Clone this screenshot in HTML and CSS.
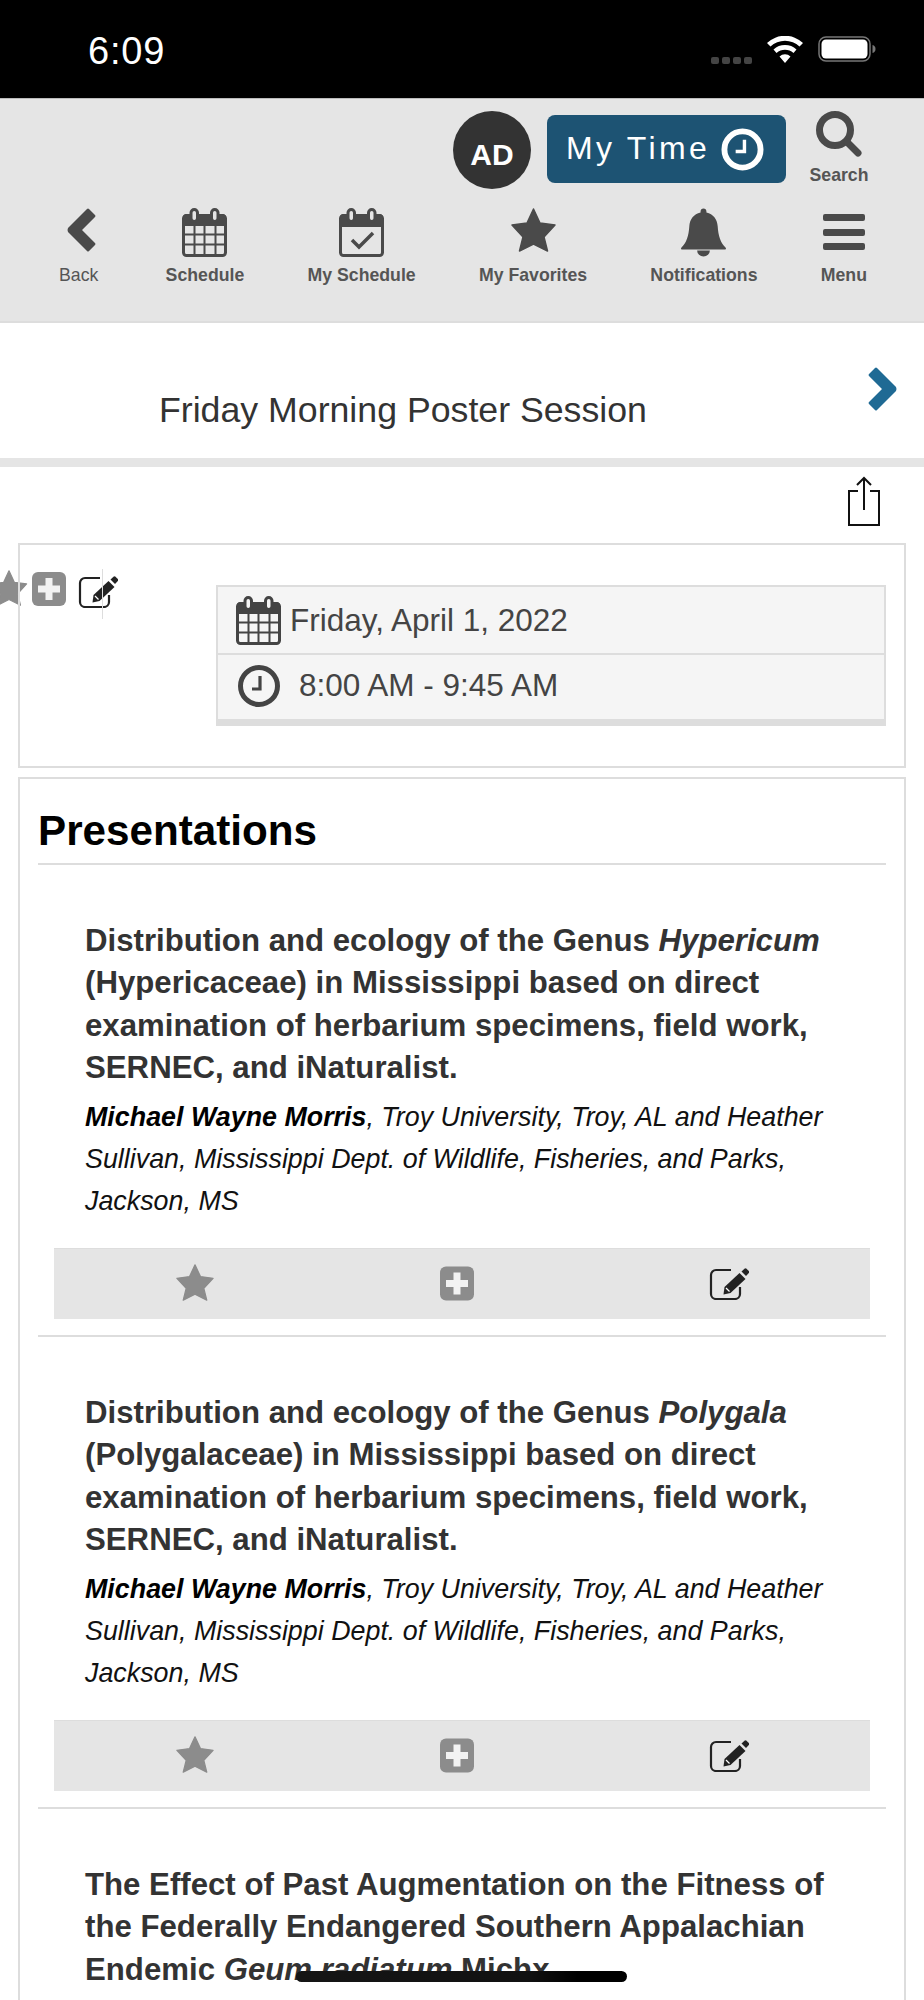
FILE: index.html
```html
<!DOCTYPE html>
<html lang="en">
<head>
<meta charset="utf-8">
<title>Friday Morning Poster Session</title>
<link rel="stylesheet" href="styles.css">
</head>
<body>
<svg class="defs" width="0" height="0" aria-hidden="true">
  <symbol id="i-cal" viewBox="0 0 45 49">
    <rect x="1.500" y="7.500" width="42" height="40" rx="3" fill="none" stroke="currentColor" stroke-width="3"/>
    <path d="M1 10a4 4 0 0 1 4-4h35a4 4 0 0 1 4 4v8H1z" fill="currentColor"/>
    <path d="M2 26.500h41M2 36.500h41M12.500 18v30M22.500 18v30M33.500 18v30" fill="none" stroke="currentColor" stroke-width="2"/>
    <rect class="ring" x="9" y="1.500" width="6.500" height="12" rx="3.200"/>
    <rect class="ring" x="29.500" y="1.500" width="6.500" height="12" rx="3.200"/>
  </symbol>
  <symbol id="i-calcheck" viewBox="0 0 45 49">
    <rect x="1.500" y="7.500" width="42" height="40" rx="3" fill="none" stroke="currentColor" stroke-width="3"/>
    <path d="M1 10a4 4 0 0 1 4-4h35a4 4 0 0 1 4 4v9H1z" fill="currentColor"/>
    <path d="M13 32l7 7 14-14" fill="none" stroke="currentColor" stroke-width="3.500"/>
    <rect class="ring" x="9" y="1.500" width="6.500" height="12" rx="3.200"/>
    <rect class="ring" x="29.500" y="1.500" width="6.500" height="12" rx="3.200"/>
  </symbol>
  <symbol id="i-star" viewBox="0 0 45 44">
    <path d="M22.500 1L29 15 44 17 33 29 36.500 43 22.500 36 8.500 43 12 29 1 17 16 15z" fill="currentColor" stroke="currentColor" stroke-width="1.500" stroke-linejoin="round"/>
  </symbol>
  <symbol id="i-plus" viewBox="0 0 34 34">
    <rect width="34" height="34" rx="6" fill="currentColor"/>
    <path d="M17 6v22M6 17h22" fill="none" stroke="#f2f2f2" stroke-width="7"/>
  </symbol>
  <symbol id="i-edit" viewBox="0 0 40 32">
    <path d="M22 2H7a5 5 0 0 0-5 5v19a5 5 0 0 0 5 5h19a5 5 0 0 0 5-5v-7" fill="none" stroke="currentColor" stroke-width="2.200"/>
    <path d="M14.500 26.500L15.500 19 30.500 5 36.500 11 21.500 25z" fill="currentColor"/>
    <path d="M32.500 3.500l3-2.800q1-.7 2 0l2.300 2.300q.7 1 0 2L37 8z" fill="currentColor"/>
    <path d="M17 20l3.500 3.500" fill="none" stroke="#fff" stroke-width="1.200"/>
  </symbol>
  <symbol id="i-clock" viewBox="0 0 42 42">
    <circle cx="21" cy="21" r="18.500" fill="none" stroke="currentColor" stroke-width="5"/>
    <path d="M22 11v13H14" fill="none" stroke="currentColor" stroke-width="3.200"/>
  </symbol>
</svg>

<header class="status">
  <span class="status-time">6:09</span>
  <div class="status-right">
    <span class="signal"><i></i><i></i><i></i><i></i></span>
    <svg class="wifi" viewBox="0 0 36 27"><path d="M18 27l-5.500-6.500a8 8 0 0 1 11 0zM9.500 17l-3-3.500a17 17 0 0 1 23 0l-3 3.500a13 13 0 0 0-17 0zM3.500 10.500L0 7a26 26 0 0 1 36 0l-3.500 3.500a21 21 0 0 0-29 0z" fill="#fff"/></svg>
    <svg class="battery" viewBox="0 0 58 26"><rect x="1" y="1" width="51" height="24" rx="7" fill="none" stroke="#777" stroke-width="1.500"/><rect x="3.500" y="3.500" width="46" height="19" rx="4.500" fill="#fff"/><path d="M54.500 9c2 .5 3 2 3 4s-1 3.500-3 4z" fill="#777"/></svg>
  </div>
</header>

<nav class="topbar">
  <div class="top-row">
    <span class="avatar">AD</span>
    <a class="mytime"><span>My Time</span><svg class="mytime-clock" viewBox="0 0 44 44"><circle cx="22" cy="22" r="18.500" fill="none" stroke="#fff" stroke-width="6"/><path d="M24 12v12H15" fill="none" stroke="#fff" stroke-width="3.500"/></svg></a>
    <a class="search">
      <svg class="search-icon" viewBox="0 0 46 46"><circle cx="19" cy="19" r="15.500" fill="none" stroke="currentColor" stroke-width="7"/><path d="M31 31l11 11" fill="none" stroke="currentColor" stroke-width="7" stroke-linecap="round"/></svg>
      <span>Search</span>
    </a>
  </div>
  <div class="nav-row">
    <a class="nav-item nav-back"><svg class="nav-icon ic-chev" viewBox="0 0 29 44"><path d="M22 1L28 7Q29 8 28 9L15 22 28 35Q29 36 28 37L22 43Q21 44 20 43L1 24Q0 22 1 20L20 1Q21 0 22 1Z" fill="currentColor"/></svg><span>Back</span></a>
    <a class="nav-item nav-schedule"><svg class="nav-icon ic-cal"><use href="#i-cal"/></svg><span>Schedule</span></a>
    <a class="nav-item"><svg class="nav-icon ic-cal"><use href="#i-calcheck"/></svg><span>My Schedule</span></a>
    <a class="nav-item"><svg class="nav-icon ic-star"><use href="#i-star"/></svg><span>My Favorites</span></a>
    <a class="nav-item"><svg class="nav-icon ic-cal" viewBox="0 0 46 49"><path d="M23 0c1.800 0 3 1.200 3 3v1c7 1.500 11 7 11.500 14 .6 10 3 17 8.200 22 .6.700.3 2-1 2H1.300c-1.300 0-1.600-1.300-1-2C5.500 35 7.900 28 8.500 18 9 11 13 5.500 20 4V3c0-1.800 1.200-3 3-3z" fill="currentColor"/><path d="M16.500 43a6.500 6 0 0 0 13 0z" fill="currentColor"/></svg><span>Notifications</span></a>
    <a class="nav-item nav-menu"><svg class="nav-icon ic-menu" viewBox="0 0 42 36"><path d="M2 0h38a2 2 0 0 1 2 2v3a2 2 0 0 1-2 2H2a2 2 0 0 1-2-2V2a2 2 0 0 1 2-2zM2 15h38a2 2 0 0 1 2 2v3a2 2 0 0 1-2 2H2a2 2 0 0 1-2-2v-3a2 2 0 0 1 2-2zM2 29h38a2 2 0 0 1 2 2v3a2 2 0 0 1-2 2H2a2 2 0 0 1-2-2v-3a2 2 0 0 1 2-2z" fill="currentColor"/></svg><span>Menu</span></a>
  </div>
</nav>

<section class="title-bar">
  <h1 class="title">Friday Morning Poster Session</h1>
  <svg class="chevron-next" viewBox="0 0 29 44"><path d="M7 1L1 7Q0 8 1 9L14 22 1 35Q0 36 1 37L7 43Q8 44 9 43L28 24Q29 22 28 20L9 1Q8 0 7 1Z" fill="#1f6a94"/></svg>
</section>

<div class="share-row">
  <svg class="share" viewBox="0 0 32 50"><path d="M10 15H1v34h30V15h-9" fill="none" stroke="#111" stroke-width="2"/><path d="M16 34V2M9 9l7-7 7 7" fill="none" stroke="#111" stroke-width="2"/></svg>
</div>

<section class="card session">
  <div class="session-actions">
    <svg class="sa-star"><use href="#i-star"/></svg>
    <svg class="sa-plus"><use href="#i-plus"/></svg>
    <svg class="sa-edit"><use href="#i-edit"/></svg>
    <i class="sa-line"></i>
  </div>
  <div class="when">
    <div class="when-row"><svg class="when-cal"><use href="#i-cal"/></svg><span>Friday, April 1, 2022</span></div>
    <div class="when-row when-time"><svg class="when-clock"><use href="#i-clock"/></svg><span>8:00 AM - 9:45 AM</span></div>
  </div>
</section>

<section class="card presentations">
  <h2 class="pres-head">Presentations</h2>

  <article class="pres">
    <h3 class="pres-title">Distribution and ecology of the Genus <em>Hypericum</em> (Hypericaceae) in Mississippi based on direct examination of herbarium specimens, field work, SERNEC, and iNaturalist.</h3>
    <p class="pres-authors"><b>Michael Wayne Morris</b>, Troy University, Troy, AL and Heather Sullivan, Mississippi Dept. of Wildlife, Fisheries, and Parks, Jackson, MS</p>
    <div class="pres-bar">
      <svg class="pb-star"><use href="#i-star"/></svg>
      <svg class="pb-plus"><use href="#i-plus"/></svg>
      <svg class="pb-edit"><use href="#i-edit"/></svg>
    </div>
  </article>

  <article class="pres">
    <h3 class="pres-title">Distribution and ecology of the Genus <em>Polygala</em> (Polygalaceae) in Mississippi based on direct examination of herbarium specimens, field work, SERNEC, and iNaturalist.</h3>
    <p class="pres-authors"><b>Michael Wayne Morris</b>, Troy University, Troy, AL and Heather Sullivan, Mississippi Dept. of Wildlife, Fisheries, and Parks, Jackson, MS</p>
    <div class="pres-bar">
      <svg class="pb-star"><use href="#i-star"/></svg>
      <svg class="pb-plus"><use href="#i-plus"/></svg>
      <svg class="pb-edit"><use href="#i-edit"/></svg>
    </div>
  </article>

  <article class="pres">
    <h3 class="pres-title">The Effect of Past Augmentation on the Fitness of the Federally Endangered Southern Appalachian Endemic <em>Geum radiatum</em> Michx.</h3>
  </article>
</section>

<div class="home-indicator"></div>
</body>
</html>
```
FILE: styles.css
```css
* { box-sizing: border-box; }
html, body { margin: 0; padding: 0; height: 2000px; overflow: hidden; background: #fff; }
body { font-family: "Liberation Sans", Arial, sans-serif; color: #333; position: relative; }
.defs { position: absolute; }
.ring { fill: var(--ring, #e5e5e5); stroke: currentColor; stroke-width: 3; }

.status { height: 98px; background: #000; display: flex; justify-content: space-between; align-items: center; padding: 0 48px 0 88px; }
.status-time { color: #fff; font-size: 38px; font-weight: 500; letter-spacing: .8px; position: relative; top: 2px; }
.status-right { display: flex; align-items: center; gap: 15px; }
.signal { display: flex; gap: 3px; margin-top: 22px; }
.signal i { width: 8px; height: 7px; border-radius: 2px; background: #444; }
.wifi { width: 36px; height: 27px; }
.battery { width: 58px; height: 26px; }

.topbar { height: 225px; background: #e5e5e5; border-top: 1px solid #bbb; border-bottom: 2px solid #ddd; color: #4a4a4a; }
.top-row { display: flex; justify-content: flex-end; align-items: flex-start; padding: 12px 55px 0 0; }
.avatar { width: 78px; height: 78px; border-radius: 50%; background: #333; color: #fff; font-size: 30px; font-weight: 700; display: flex; align-items: center; justify-content: center; padding-top: 9px; }
.mytime { margin: 4px 0 0 16px; width: 239px; height: 68px; border-radius: 8px; background: #1d5373; color: #fff; font-size: 32px; letter-spacing: 3.300px; display: flex; align-items: center; padding: 0 22px 2px 19px; justify-content: space-between; }
.mytime-clock { width: 43px; height: 43px; margin-top: 2px; }
.search { margin-left: 23px; display: flex; flex-direction: column; align-items: center; width: 60px; font-size: 17.700px; font-weight: 700; color: #555; }
.search-icon { width: 46px; height: 46px; color: #4a4a4a; }
.search span { margin-top: 8px; }

.nav-row { display: flex; justify-content: space-between; padding: 19px 57px 0 59px; }
.nav-item { display: flex; flex-direction: column; align-items: center; font-size: 17.700px; font-weight: 700; color: #555; }
.nav-back { font-weight: 400; }
.nav-schedule { margin-left: 4px; }
.nav-icon { color: #4a4a4a; display: block; }
.ic-chev { width: 29px; height: 44px; margin: 0 0 13px 5px; }
.ic-cal { width: 45px; height: 49px; margin-bottom: 8px; }
.ic-star { width: 45px; height: 44px; margin-bottom: 13px; }
.ic-menu { width: 42px; height: 36px; margin: 6px 0 15px; }
.nav-item span { line-height: 20px; }

.title-bar { height: 144px; border-bottom: 9px solid #e5e5e5; display: flex; justify-content: space-between; padding: 44px 27px 0 159px; }
.title { margin: 22px 0 0; font-size: 35.700px; font-weight: 400; line-height: 42px; color: #333; }
.chevron-next { width: 29px; height: 44px; }

.share-row { display: flex; justify-content: flex-end; padding: 9px 44px 0 0; height: 76px; }
.share { width: 32px; height: 50px; }

.card { margin: 0 18px; border: 2px solid #ddd; position: relative; background: #fff; }
.session { height: 225px; padding: 40px 18px 0 196px; margin-bottom: 9px; border-color: transparent; background: none; }
.session::after { content: ""; position: absolute; inset: -2px; border: 2px solid #ddd; z-index: 1; pointer-events: none; }
.session-actions { position: absolute; left: -20px; top: 24px; width: 140px; height: 50px; }
.sa-star { position: absolute; left: -10px; top: 1px; width: 38px; height: 36px; color: #8c8c8c; }
.sa-plus { position: absolute; left: 32px; top: 3px; width: 34px; height: 34px; color: #8c8c8c; }
.sa-edit { position: absolute; left: 78px; top: 7px; width: 40px; height: 32px; color: #222; }
.sa-line { position: absolute; left: 102px; top: 0; width: 1px; height: 50px; background: #ddd; }

.when { border: 2px solid #ddd; border-bottom-width: 7px; background: #f5f5f5; --ring: #f5f5f5; color: #444; font-size: 31.500px; }
.when-row { height: 66px; display: flex; align-items: center; padding-left: 18px; }
.when-time { height: 66px; border-top: 2px solid #ddd; }
.when-cal { width: 45px; height: 49px; margin-top: 1px; }
.when-row span { margin-left: 9px; }
.when-clock { width: 42px; height: 42px; margin: -2px 0 0 2px; }
.when-time span { margin: -4px 0 0 19px; }

.presentations { min-height: 1240px; padding: 0 18px; }
.pres-head { margin: 0; height: 86px; border-bottom: 2px solid #ddd; font-size: 42.200px; color: #000; line-height: 50px; padding-top: 27px; }
.pres { padding: 55px 16px 0; border-bottom: 2px solid #ddd; height: 472px; }
.pres:last-child { border-bottom: 0; height: auto; }
.pres-title { margin: 0 30px 0 31px; font-size: 31.200px; line-height: 42.400px; font-weight: 700; color: #333; }
.pres-authors { margin: 6px 20px 0 31px; font-size: 26.850px; line-height: 42px; font-style: italic; color: #111; }
.pres-authors b { color: #000; }
.pres-bar { margin-top: 26px; height: 71px; background: #e5e5e5; border-top: 1px solid #ddd; display: flex; align-items: center; padding: 0 120px 2px 122px; }
.pb-star { width: 38px; height: 37px; color: #8c8c8c; }
.pb-plus { width: 34px; height: 35px; color: #8c8c8c; margin: 2px 0 0 226px; }
.pb-edit { width: 40px; height: 32px; color: #222; margin: 2px 0 0 235px; }

.home-indicator { position: fixed; left: 296px; top: 1971px; width: 331px; height: 11px; border-radius: 6px; background: linear-gradient(90deg, #151515, #111 70%, #000 85%); }
```
